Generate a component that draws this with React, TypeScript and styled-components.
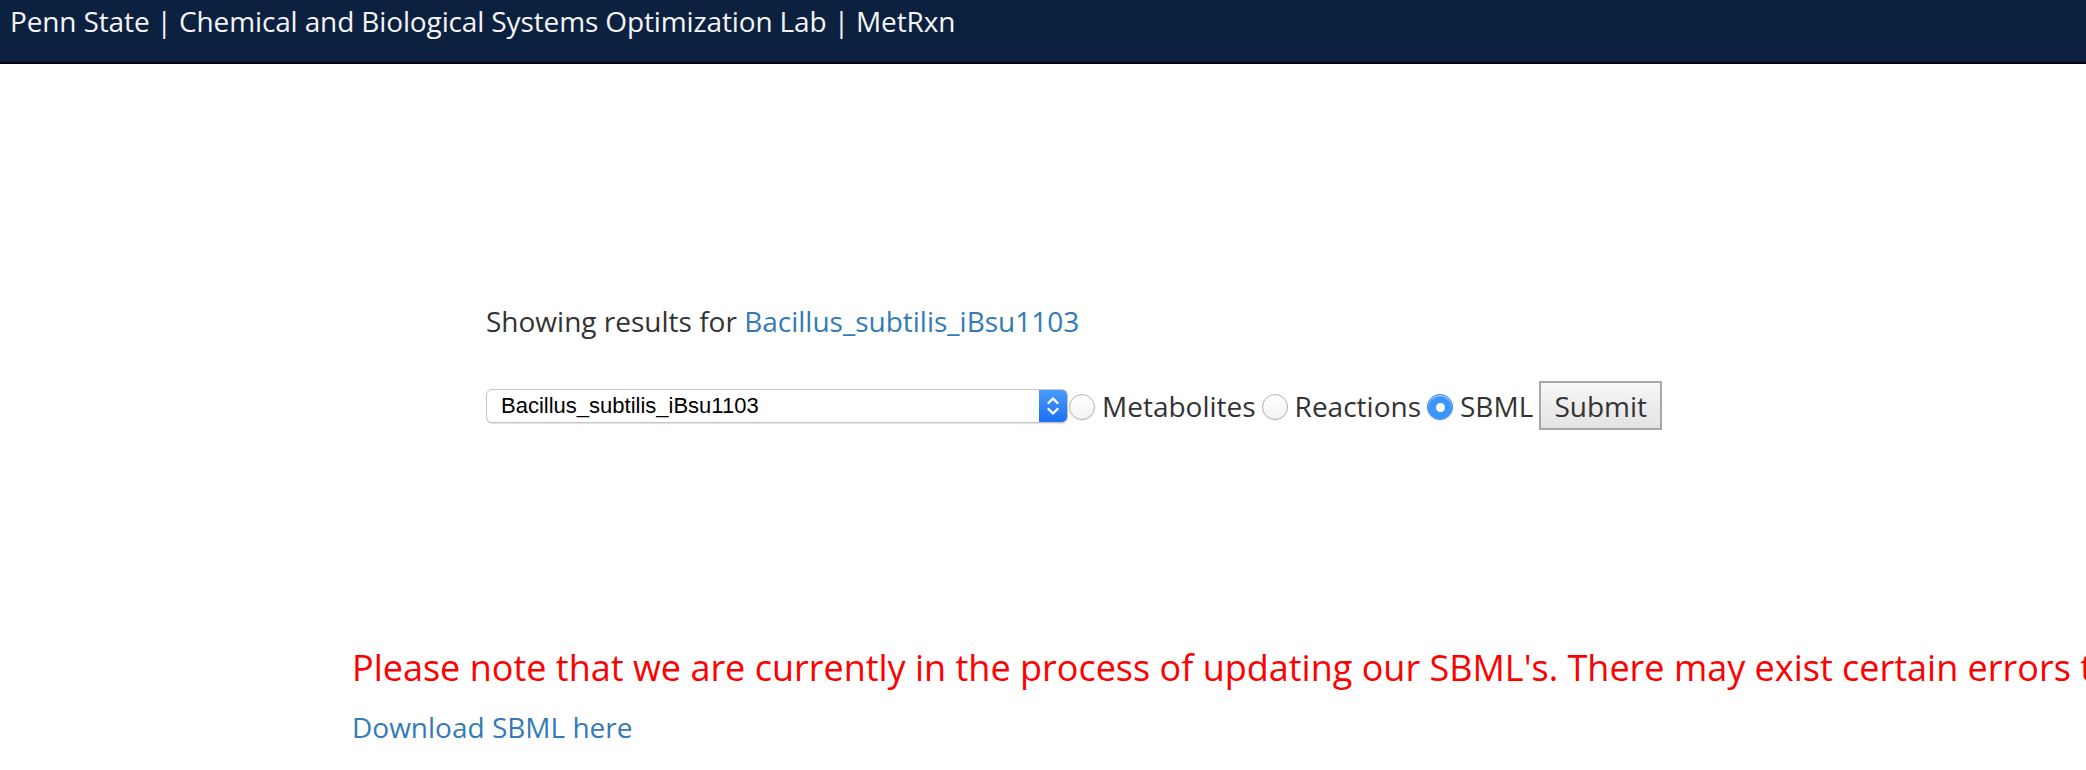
import React from "react";
import styled, { createGlobalStyle } from "styled-components";

const GlobalStyle = createGlobalStyle`
  html, body {
    margin: 0;
    padding: 0;
    background: #ffffff;
    overflow: hidden;
  }
  body {
    font-family: "Open Sans", "Noto Sans", sans-serif;
    color: #333333;
  }
  * { box-sizing: border-box; }
`;

const Page = styled.div`
  width: 2086px;
  height: 770px;
  overflow: hidden;
  display: flex;
  flex-direction: column;
`;

const Header = styled.header`
  height: 64px;
  flex: none;
  background: #0c2140;
  border-bottom: 2px solid #03070d;
  padding: 1px 0 0 10px;
`;

const Brand = styled.div`
  font-size: 28px;
  letter-spacing: -0.13px;
  line-height: 40px;
  color: #f4f5f7;
  white-space: nowrap;
`;

const Results = styled.section`
  padding: 237px 0 0 486px;
  display: flex;
  flex-direction: column;
`;

const Showing = styled.p`
  margin: 0;
  font-size: 28px;
  line-height: 40px;
  color: #333333;
`;

const Link = styled.a`
  color: #337ab7;
  text-decoration: none;
`;

const FormRow = styled.form`
  margin-top: 40px;
  display: flex;
  align-items: center;
  height: 49px;
  font-size: 28px;
  color: #333333;
`;

const SelectBox = styled.div`
  position: relative;
  width: 582px;
  height: 34px;
  margin-right: 1px;
  border: 1px solid #c4c4c4;
  border-radius: 6px;
  background: #ffffff;
  box-shadow: 0 1px 1px rgba(0, 0, 0, 0.12);
  display: flex;
  align-items: stretch;
  overflow: hidden;
`;

const NativeSelect = styled.select`
  appearance: none;
  -webkit-appearance: none;
  flex: 1;
  border: none;
  outline: none;
  background: transparent;
  padding: 0 0 0 14px;
  font-family: "Liberation Sans", Arial, sans-serif;
  font-size: 22px;
  color: #000000;
`;

const ArrowBox = styled.div`
  width: 28px;
  flex: none;
  background: linear-gradient(#4b9cfb, #1b6ff2);
  display: flex;
  align-items: center;
  justify-content: center;
  pointer-events: none;
`;

const Option = styled.label`
  display: flex;
  align-items: center;
  gap: 7px;
  margin-right: 6px;
  white-space: nowrap;
  line-height: 40px;
`;

const Radio = styled.input`
  appearance: none;
  -webkit-appearance: none;
  width: 26px;
  height: 26px;
  margin: 3px 0 0 0;
  border-radius: 50%;
  border: 1px solid #b3b3b3;
  background: linear-gradient(#ffffff, #f3f3f3);
  box-shadow: inset 0 1px 1px rgba(255, 255, 255, 0.8), 0 1px 1px rgba(0, 0, 0, 0.08);
  display: grid;
  place-items: center;
  &:checked {
    border-color: #3a8ff5;
    background: #3d97fb;
  }
  &:checked::after {
    content: "";
    width: 9px;
    height: 9px;
    border-radius: 50%;
    background: #ffffff;
  }
`;

const SubmitButton = styled.button`
  height: 49px;
  width: 123px;
  margin-left: 0;
  padding: 0;
  border: 2px solid #a8a8a8;
  background: linear-gradient(#f7f7f7, #e3e3e3);
  font-family: "Open Sans", sans-serif;
  font-size: 28px;
  color: #333333;
`;

const Notice = styled.section`
  margin-top: 213px;
  padding-left: 352px;
  display: flex;
  flex-direction: column;
  gap: 14px;
`;

const Warning = styled.p`
  margin: 0;
  font-size: 36px;
  line-height: 50px;
  color: #ff0000;
  white-space: nowrap;
`;

const Download = styled.a`
  font-size: 28px;
  line-height: 40px;
  color: #337ab7;
  text-decoration: none;
`;

const Chevrons = () => (
  <svg width="14" height="22" viewBox="0 0 14 22" fill="none" stroke="#ffffff" strokeWidth="2.4" strokeLinecap="round" strokeLinejoin="round">
    <polyline points="2.5,8 7,3.5 11.5,8" />
    <polyline points="2.5,14 7,18.5 11.5,14" />
  </svg>
);

export default function App() {
  return (
    <Page>
      <GlobalStyle />
      <Header>
        <Brand>Penn State | Chemical and Biological Systems Optimization Lab | MetRxn</Brand>
      </Header>
      <Results>
        <Showing>
          Showing results for <Link href="#">Bacillus_subtilis_iBsu1103</Link>
        </Showing>
        <FormRow onSubmit={(e) => e.preventDefault()}>
          <SelectBox>
            <NativeSelect defaultValue="Bacillus_subtilis_iBsu1103">
              <option>Bacillus_subtilis_iBsu1103</option>
            </NativeSelect>
            <ArrowBox>
              <Chevrons />
            </ArrowBox>
          </SelectBox>
          <Option>
            <Radio type="radio" name="kind" value="metabolites" />
            Metabolites
          </Option>
          <Option>
            <Radio type="radio" name="kind" value="reactions" />
            Reactions
          </Option>
          <Option>
            <Radio type="radio" name="kind" value="sbml" defaultChecked />
            SBML
          </Option>
          <SubmitButton type="submit">Submit</SubmitButton>
        </FormRow>
      </Results>
      <Notice>
        <Warning>
          Please note that we are currently in the process of updating our SBML's. There may exist certain errors that we are working to correct.
        </Warning>
        <Download href="#">Download SBML here</Download>
      </Notice>
    </Page>
  );
}
